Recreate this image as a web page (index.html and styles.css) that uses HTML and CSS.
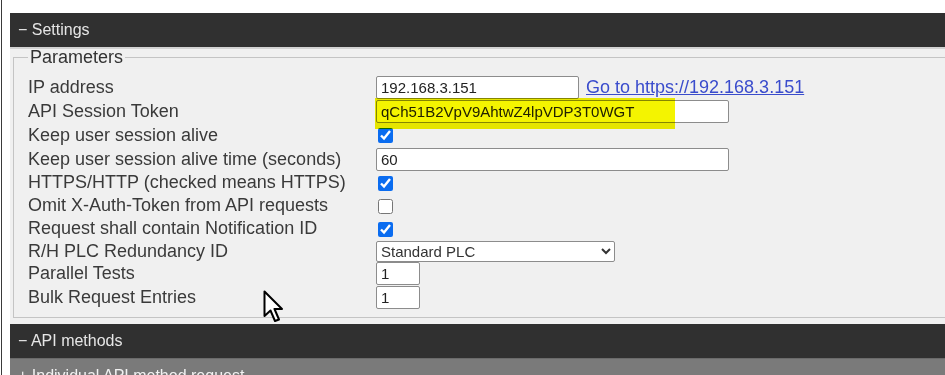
FILE: index.html
```html
<!DOCTYPE html>
<html lang="en">
	<head>
		<meta charset="utf-8">
		<title>Settings</title>
		<link rel="stylesheet" href="styles.css">
	</head>
	<body>
		<div class="frame">
			<div class="panel">
				<div class="bar">&minus; Settings</div>
				<div class="bar-body">
					<fieldset class="params">
						<legend>Parameters</legend>
						<table class="param-table">
							<tr class="r1">
								<td class="lbl">IP address</td>
								<td><input class="txt ip" type="text" value="192.168.3.151"><a class="link" href="#">Go to https://192.168.3.151</a></td>
							</tr>
							<tr class="r2">
								<td class="lbl">API Session Token</td>
								<td><span class="token-wrap"><input class="txt wide" type="text" value="qCh51B2VpV9AhtwZ4lpVDP3T0WGT"><span class="hl"></span></span></td>
							</tr>
							<tr class="r3">
								<td class="lbl">Keep user session alive</td>
								<td><input class="chk" type="checkbox" checked></td>
							</tr>
							<tr class="r4">
								<td class="lbl">Keep user session alive time (seconds)</td>
								<td><input class="txt wide" type="text" value="60"></td>
							</tr>
							<tr class="r5">
								<td class="lbl">HTTPS/HTTP (checked means HTTPS)</td>
								<td><input class="chk" type="checkbox" checked></td>
							</tr>
							<tr class="r6">
								<td class="lbl">Omit X-Auth-Token from API requests</td>
								<td><input class="chk" type="checkbox"></td>
							</tr>
							<tr class="r7">
								<td class="lbl">Request shall contain Notification ID</td>
								<td><input class="chk" type="checkbox" checked></td>
							</tr>
							<tr class="r8">
								<td class="lbl">R/H PLC Redundancy ID</td>
								<td>
									<select class="sel">
										<option>Standard PLC</option>
										<option>PLC 1</option>
										<option>PLC 2</option>
									</select>
								</td>
							</tr>
							<tr class="r9">
								<td class="lbl">Parallel Tests</td>
								<td><input class="txt num" type="text" value="1"></td>
							</tr>
							<tr class="r10">
								<td class="lbl">Bulk Request Entries</td>
								<td><input class="txt num" type="text" value="1"></td>
							</tr>
						</table>
					</fieldset>
				</div>
				<div class="bar">&minus; API methods</div>
				<div class="bar sub-bar">+ Individual API method request</div>
			</div>
			<svg class="cursor" width="22" height="34" viewBox="0 0 22 34">
				<path d="M1.5,1.5 L1.5,26 L7.5,20.5 L12,31 L16,29.5 L11.5,19 L19,19 Z" fill="#fff" stroke="#000" stroke-width="2" stroke-linejoin="round"/>
			</svg>
		</div>
	</body>
</html>
```

FILE: styles.css
```css
html, body {
	margin: 0;
}

body {
	background-color: #FFFFFF;
	font-family: "Liberation Sans", Arial, sans-serif;
	height: 375px;
	overflow: hidden;
}

.frame {
	position: relative;
	margin-left: 1px;
	border-left: 1px solid #3a3a3a;
	padding: 13px 0 0 8px;
	height: 375px;
	box-sizing: border-box;
}

.panel {
	width: 960px;
}

.bar {
	background-color: #303030;
	color: #e6e6e6;
	font-size: 16px;
	height: 34px;
	line-height: 34px;
	padding-left: 8px;
}

.sub-bar {
	background-color: #7a7a7a;
	color: #f2f2f2;
	border-top: 1px solid #6a6a6a;
}

.bar-body {
	background-color: #f0f0f0;
	border-top: 2px solid #d2d2d2;
	padding: 0 0 6px 3px;
}

.params {
	margin: 0;
	border: 1px solid #c4c4c4;
	padding: 10px 0 8px 14px;
}

legend {
	font-size: 18px;
	line-height: 17px;
	color: #333333;
	padding: 0 2px;
}

.param-table {
	border-collapse: collapse;
	font-size: 18px;
	color: #3a3a3a;
}

.param-table td {
	padding: 0;
	height: 23px;
	vertical-align: middle;
}

.param-table .r2 td,
.param-table .r3 td,
.param-table .r4 td,
.param-table .r10 td {
	height: 24px;
}

.param-table .r8 td,
.param-table .r9 td {
	height: 22px;
}

.lbl {
	width: 348px;
}

.txt {
	font-family: "Liberation Sans", Arial, sans-serif;
	font-size: 15px;
	color: #222222;
	background-color: #FFFFFF;
	height: 23px;
	box-sizing: border-box;
	border: 1px solid #8c8c8c;
	border-radius: 2px;
	padding: 0 4px;
	margin: 0;
	vertical-align: middle;
}

.ip {
	width: 203px;
}

.wide {
	width: 353px;
}

.num {
	width: 44px;
}

.link {
	color: #3a4ccc;
	margin-left: 7px;
	vertical-align: middle;
}

.token-wrap {
	position: relative;
	display: inline-block;
	vertical-align: middle;
	height: 23px;
}

.hl {
	position: absolute;
	left: -1px;
	top: -2px;
	width: 300px;
	height: 31px;
	background-color: #f4f400;
	mix-blend-mode: multiply;
}

.chk {
	width: 15px;
	height: 15px;
	margin: 0 0 0 2px;
	vertical-align: middle;
	accent-color: #0a6cf0;
}

.sel {
	font-family: "Liberation Sans", Arial, sans-serif;
	font-size: 15px;
	color: #333333;
	width: 239px;
	height: 21px;
	margin: 0;
	border: 1px solid #8c8c8c;
	border-radius: 2px;
	background-color: #FFFFFF;
	vertical-align: middle;
}

.cursor {
	position: absolute;
	left: 261px;
	top: 290px;
}
```
